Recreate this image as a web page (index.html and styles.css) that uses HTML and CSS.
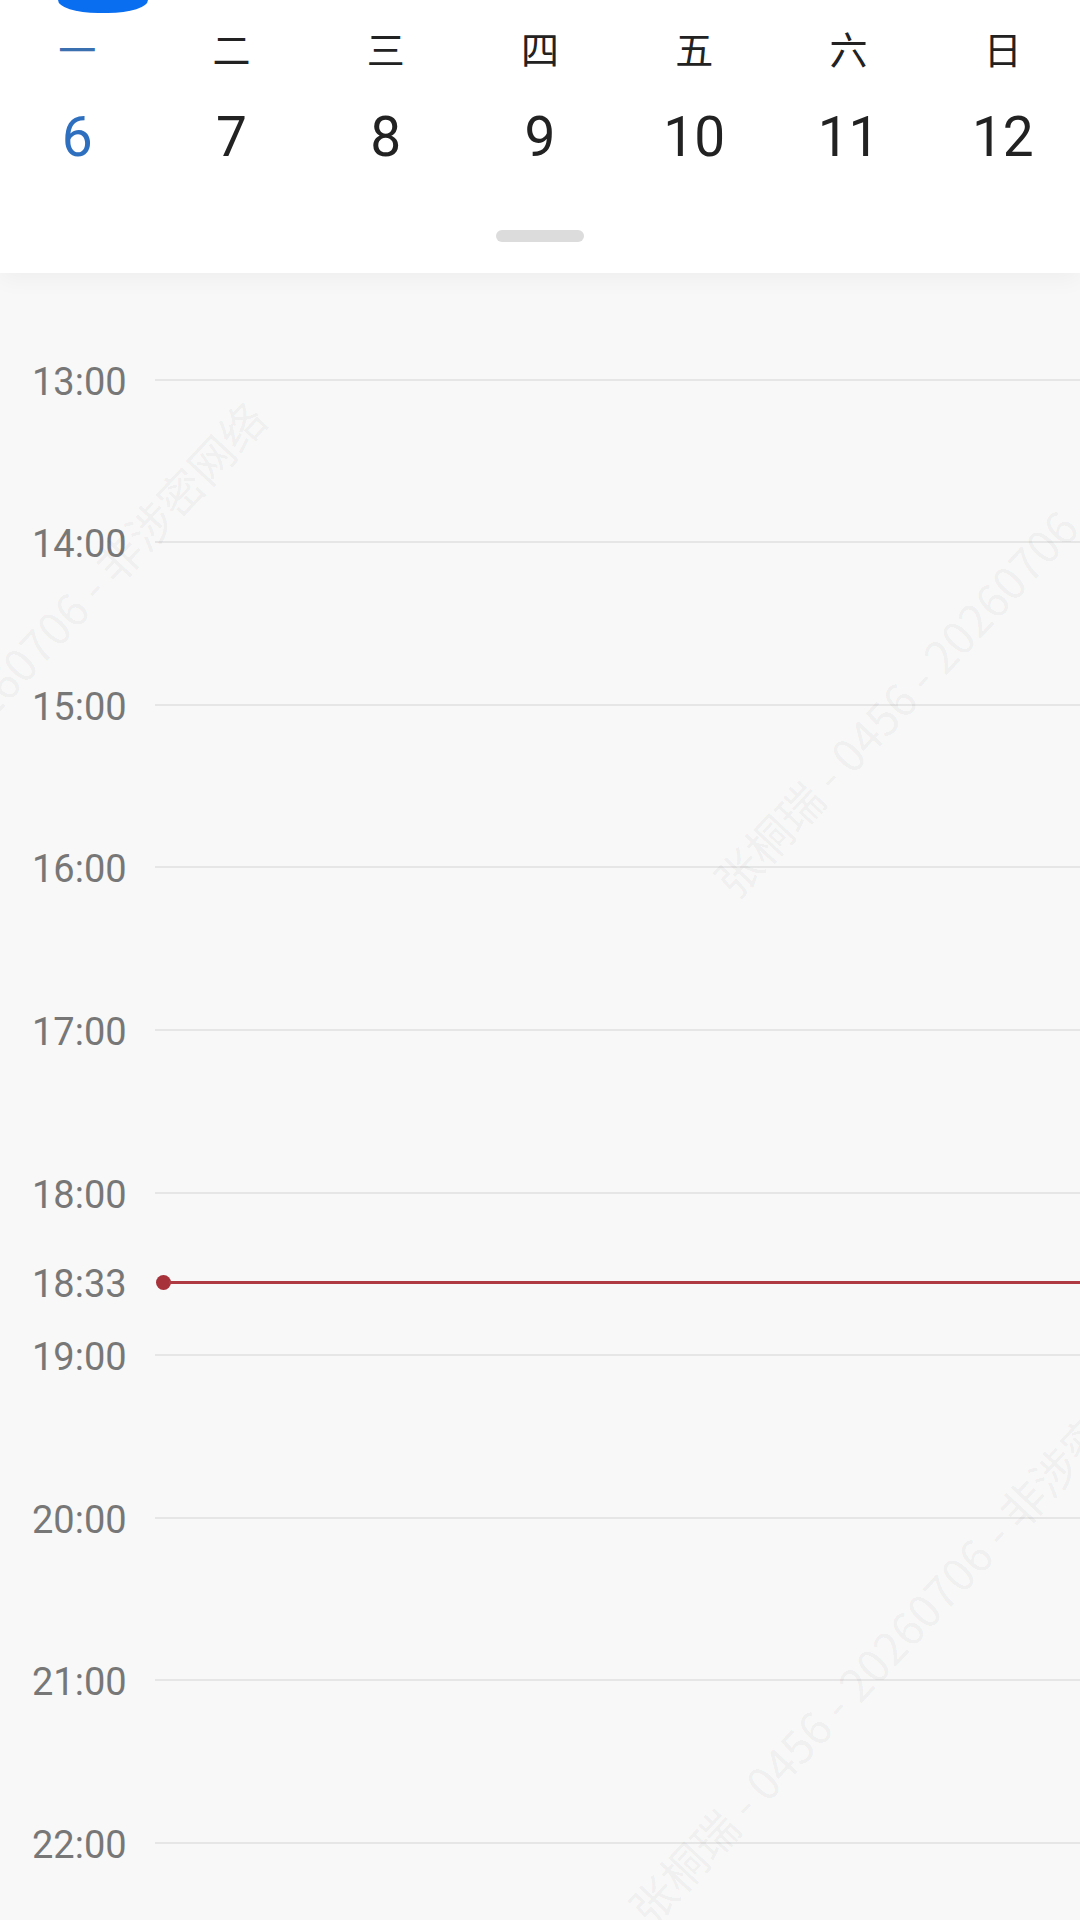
FILE: index.html
```html
<!DOCTYPE html>
<html lang="zh-CN">
<head>
<meta charset="utf-8">
<title>日历</title>
<link rel="stylesheet" href="styles.css">
</head>
<body>
<div class="page">
  <header class="header">
    <div class="pill"></div>
    <div class="week weekdays">
      <div class="cell today">一</div>
      <div class="cell">二</div>
      <div class="cell">三</div>
      <div class="cell">四</div>
      <div class="cell">五</div>
      <div class="cell">六</div>
      <div class="cell">日</div>
    </div>
    <div class="week dates">
      <div class="cell today">6</div>
      <div class="cell">7</div>
      <div class="cell">8</div>
      <div class="cell">9</div>
      <div class="cell">10</div>
      <div class="cell">11</div>
      <div class="cell">12</div>
    </div>
    <div class="handle"></div>
  </header>

  <main class="timeline">
    <div class="hour"><div class="band"><span class="label">13:00</span><span class="rule"></span></div></div>
    <div class="hour"><div class="band"><span class="label">14:00</span><span class="rule"></span></div></div>
    <div class="hour"><div class="band"><span class="label">15:00</span><span class="rule"></span></div></div>
    <div class="hour"><div class="band"><span class="label">16:00</span><span class="rule"></span></div></div>
    <div class="hour"><div class="band"><span class="label">17:00</span><span class="rule"></span></div></div>
    <div class="hour"><div class="band"><span class="label">18:00</span><span class="rule"></span></div></div>
    <div class="hour"><div class="band"><span class="label">19:00</span><span class="rule"></span></div></div>
    <div class="hour"><div class="band"><span class="label">20:00</span><span class="rule"></span></div></div>
    <div class="hour"><div class="band"><span class="label">21:00</span><span class="rule"></span></div></div>
    <div class="hour"><div class="band"><span class="label">22:00</span><span class="rule"></span></div></div>

    <div class="now">
      <span class="label">18:33</span><span class="dot"></span><span class="now-rule"></span>
    </div>
  </main>

  <div class="watermarks" aria-hidden="true">
    <span class="wm wm1">张桐瑞 - 0456 - 20260706 - 非涉密网络</span>
    <span class="wm wm2">张桐瑞 - 0456 - 20260706 - 非涉密网络</span>
    <span class="wm wm3">张桐瑞 - 0456 - 20260706 - 非涉密网络</span>
  </div>
</div>
</body>
</html>
```
FILE: styles.css
```css
* {
  box-sizing: border-box;
}

html, body {
  margin: 0;
  padding: 0;
}

body {
  width: 1080px;
  height: 1920px;
  overflow: hidden;
  background: #f8f8f8;
  font-family: Roboto, "Noto Sans CJK SC", sans-serif;
}

.page {
  position: relative;
  width: 1080px;
  height: 1920px;
  overflow: hidden;
}

.header {
  position: relative;
  z-index: 2;
  height: 273px;
  background: #ffffff;
  display: flex;
  flex-direction: column;
  box-shadow: 0 6px 22px rgba(0, 0, 0, 0.045);
}

.pill {
  margin-left: 58px;
  width: 90px;
  height: 13px;
  background: #0a6ef0;
  border-radius: 0 0 40px 40px / 0 0 13px 13px;
}

.week {
  display: grid;
  grid-template-columns: repeat(7, 1fr);
}

.cell {
  text-align: center;
  color: #222222;
}

.weekdays {
  margin-top: 15px;
}

.weekdays .cell {
  font-family: "Noto Sans CJK SC", sans-serif;
  font-size: 38px;
  line-height: 40px;
  height: 40px;
}

.dates {
  margin-top: 37px;
}

.dates .cell {
  font-family: Roboto, sans-serif;
  font-size: 55px;
  line-height: 64px;
  height: 64px;
}

.weekdays .today {
  color: #3a6fb0;
}

.dates .today {
  color: #2e6fbf;
}

.handle {
  align-self: center;
  margin-top: 61px;
  width: 88px;
  height: 12px;
  border-radius: 6px;
  background: #dcdcdc;
}

.timeline {
  position: relative;
  z-index: 1;
  padding-top: 83.6px;
  display: flex;
  flex-direction: column;
}

.hour {
  height: 162.6px;
  flex: none;
}

.band {
  display: flex;
  align-items: center;
  height: 46px;
  padding-left: 32px;
}

.label {
  width: 123px;
  flex: none;
  padding-top: 4px;
  font-family: Roboto, sans-serif;
  font-size: 38px;
  line-height: 46px;
  color: #777777;
}

.rule {
  flex: 1;
  height: 2px;
  background: #e6e6e6;
}

.now {
  position: absolute;
  left: 0;
  right: 0;
  top: 986px;
  height: 46px;
  padding-left: 32px;
  display: flex;
  align-items: center;
}

.dot {
  flex: none;
  width: 15px;
  height: 15px;
  margin-left: 1px;
  border-radius: 50%;
  background: #a8323a;
}

.now-rule {
  flex: 1;
  height: 3px;
  margin-left: -2px;
  background: #b03a42;
}

.watermarks {
  position: absolute;
  inset: 0;
  z-index: 3;
  pointer-events: none;
  overflow: hidden;
}

.wm {
  position: absolute;
  white-space: nowrap;
  font-family: "Noto Sans CJK SC", sans-serif;
  font-size: 45px;
  line-height: 50px;
  color: rgba(0, 0, 0, 0.05);
  transform-origin: 0 50%;
  transform: rotate(-47deg);
}

.wm1 {
  left: -267px;
  top: 945px;
}

.wm2 {
  left: 722px;
  top: 863px;
}

.wm3 {
  left: 637px;
  top: 1891px;
}
```
